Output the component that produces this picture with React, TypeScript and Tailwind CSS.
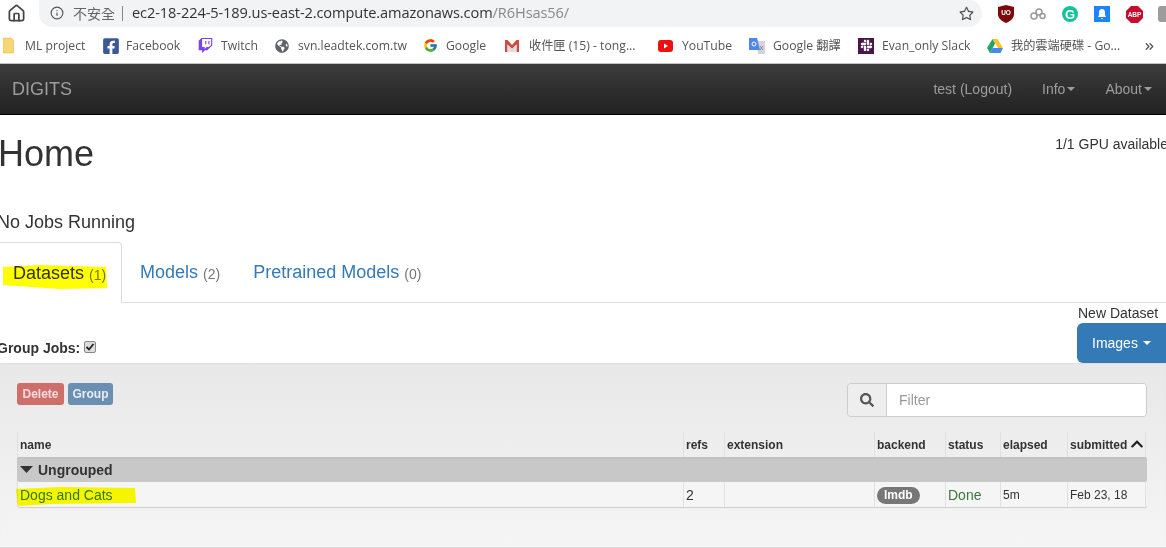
import React from "react";
import { FaTwitch, FaGlobeAmericas, FaFacebookSquare, FaSlack, FaSearch, FaRegStar, FaChevronUp } from "react-icons/fa";
import { FcGoogle } from "react-icons/fc";
import { LuHouse, LuInfo, LuChevronsRight } from "react-icons/lu";

const Folder = () => (
  <svg width="11" height="17" viewBox="0 0 10 16"><path d="M0 1h7l3 2v12H0z" fill="#f7d774" stroke="#e3b94e" strokeWidth="0.6" /></svg>
);
const Gmail = () => (
  <svg width="14" height="12" viewBox="0 0 14 12"><path d="M0 0h2.500L7 5l4.500-5H14v12h-2.500V4.500L7 9 2.500 4.500V12H0z" fill="#cf4a3f" /><path d="M2.500 4.500 7 9l4.500-4.500V12h-9z" fill="#ddd" /></svg>
);
const Youtube = () => (
  <svg width="15" height="12" viewBox="0 0 15 12"><rect width="15" height="12" rx="3" fill="#ee0f0f" /><path d="M6 3.500 10 6 6 8.500z" fill="#fff" /></svg>
);
const Translate = () => (
  <svg width="16" height="16" viewBox="0 0 16 16"><path d="M7 3h9v13H9z" fill="#d5d5d5" /><path d="M0 0h8l3 12H0z" fill="#4f86ec" /><circle cx="5" cy="6" r="2" fill="none" stroke="#fff" strokeWidth="1" /><path d="M11 8l3 4m0-4-3 4" stroke="#888" /></svg>
);
const Drive = () => (
  <svg width="16" height="14" viewBox="0 0 16 14"><path d="M5.500 0h5L16 9h-5z" fill="#f7c32e" /><path d="M5.500 0 8 4.500 3 14 0 9z" fill="#1fa463" /><path d="M5.500 9H16l-2.500 5H3z" fill="#4688f1" /></svg>
);
const SlackTile = () => (
  <span className="flex h-[16px] w-[16px] items-center justify-center bg-[#4a154b]">
    <FaSlack size={13} color="#ffffff" />
  </span>
);
const UBlock = () => (
  <svg width="16" height="18" viewBox="0 0 16 18">
    <path d="M0 2 8 0l8 2v7c0 4-3 7-8 9-5-2-8-5-8-9z" fill="#7d0a0a" />
    <text x="8" y="10" textAnchor="middle" fontSize="6.500" fontWeight="700" fill="#fff" fontFamily="Liberation Sans">UO</text>
  </svg>
);
const Cloudish = () => (
  <svg width="16" height="12" viewBox="0 0 16 12" fill="none" stroke="#9a9a9a" strokeWidth="1.500"><circle cx="4" cy="8" r="3" /><circle cx="9" cy="4" r="3" /><circle cx="12.500" cy="8" r="2.500" /></svg>
);
const Grammarly = () => (
  <div className="flex h-4 w-4 items-center justify-center rounded-full bg-[#15c39a] text-[13px] font-bold leading-none text-white">G</div>
);
const Bell = () => (
  <svg width="16" height="16" viewBox="0 0 16 16"><rect width="16" height="16" fill="#1a85ff" /><path d="M8 3c-2 0-3 1.500-3 3.500V9l-1 2h8l-1-2V6.500C11 4.500 10 3 8 3zM7 12h2l-1 1.500z" fill="#fff" /></svg>
);
const Abp = () => (
  <svg width="17" height="17" viewBox="0 0 17 17">
    <path d="M5 0h7l5 5v7l-5 5H5l-5-5V5z" fill="#c70d2c" />
    <text x="8.500" y="11" textAnchor="middle" fontSize="6.500" fontWeight="700" fill="#fff" fontFamily="Liberation Sans">ABP</text>
  </svg>
);

const bookmarks: { icon: React.ReactNode; label: string; iconW: string; width: string }[] = [
  { icon: <Folder />, label: "ML project", iconW: "w-[22px]", width: "w-[99px]" },
  { icon: <FaFacebookSquare size={18} color="#3b5998" />, label: "Facebook", iconW: "w-[24px]", width: "w-[96px]" },
  { icon: <FaTwitch size={15} color="#7e3ff2" />, label: "Twitch", iconW: "w-[23px]", width: "w-[77px]" },
  { icon: <FaGlobeAmericas size={14} color="#5f6368" />, label: "svn.leadtek.com.tw", iconW: "w-[23px]", width: "w-[148px]" },
  { icon: <FcGoogle size={15} />, label: "Google", iconW: "w-[23px]", width: "w-[82px]" },
  { icon: <Gmail />, label: "收件匣 (15) - tong...", iconW: "w-[24px]", width: "w-[153px]" },
  { icon: <Youtube />, label: "YouTube", iconW: "w-[24px]", width: "w-[91px]" },
  { icon: <Translate />, label: "Google 翻譯", iconW: "w-[24px]", width: "w-[109px]" },
  { icon: <SlackTile />, label: "Evan_only Slack", iconW: "w-[24px]", width: "w-[129px]" },
  { icon: <Drive />, label: "我的雲端硬碟 - Go...", iconW: "w-[24px]", width: "w-[150px]" },
];

const cols = ["w-[666px]", "w-[41px]", "w-[150px]", "w-[71px]", "w-[55px]", "w-[67px]", "w-[79px]"];
const heads = ["name", "refs", "extension", "backend", "status", "elapsed", "submitted"];

export default function App() {
  return (
    <div className="relative h-[548px] w-[1166px] overflow-hidden bg-white font-['Liberation_Sans',sans-serif] text-[14px] text-[#333]">
      {/* browser toolbar */}
      <div className="flex h-[27px] items-start bg-white">
        <div className="flex w-[39px] shrink-0 justify-center pt-[4px] pr-[7px] text-[#444]">
          <LuHouse size={19} strokeWidth={2.2} />
        </div>
        <div className="flex h-[27px] w-[943px] shrink-0 items-center rounded-r-[14px] rounded-bl-[14px] bg-[#f1f3f4] pb-[1px] pl-[11px] pr-[8px]">
          <LuInfo size={14} strokeWidth={2} className="text-[#555]" />
          <span className="ml-[9px] font-['Noto_Sans_CJK_TC',sans-serif] text-[14px] text-[#666]">不安全</span>
          <span className="ml-[7px] mr-[9px] h-[15px] w-px bg-[#888]" />
          <span className="font-['Open_Sans',sans-serif] text-[14.600px] tracking-[-0.1px] text-[#333]">
            ec2-18-224-5-189.us-east-2.compute.amazonaws.com<span className="text-[#888]">/R6Hsas56/</span>
          </span>
          <FaRegStar size={15} className="ml-auto text-[#555]" />
        </div>
        <div className="flex shrink-0 items-center pl-[16px] pt-[5px]">
          <div className="flex w-[32px] shrink-0 justify-start"><UBlock /></div>
          <div className="flex w-[32px] shrink-0 justify-start"><Cloudish /></div>
          <div className="flex w-[32px] shrink-0 justify-start"><Grammarly /></div>
          <div className="flex w-[32px] shrink-0 justify-start"><Bell /></div>
          <div className="flex w-[32px] shrink-0 justify-start"><Abp /></div>
          <div className="h-[16px] w-[16px] shrink-0 rounded-[3px] bg-[#9c9c9c]" />
        </div>
      </div>

      {/* bookmarks */}
      <div className="flex h-[37px] items-center border-b border-[#c4c4c4] bg-white pl-[3px] pt-[2px] font-['Open_Sans','Noto_Sans_CJK_TC',sans-serif] text-[12.200px] text-[#555]">
        {bookmarks.map((b) => (
          <div key={b.label} className={`flex shrink-0 items-center ${b.width}`}>
            <span className={`flex shrink-0 items-center ${b.iconW}`}>{b.icon}</span>
            <span className="whitespace-nowrap">{b.label}</span>
          </div>
        ))}
        <LuChevronsRight size={13} strokeWidth={2.5} className="ml-[6px] text-[#555]" />
      </div>

      {/* navbar */}
      <div className="flex h-[51px] items-center justify-between border-b border-black bg-gradient-to-b from-[#3c3c3c] to-[#222222] pl-[12px] text-[#9d9d9d]">
        <span className="text-[18px]">DIGITS</span>
        <div className="flex items-center">
          <span className="mr-[30px]">test (Logout)</span>
          <span className="mr-[30px] flex items-center">Info<Caret className="ml-[2px] border-t-[#9d9d9d]" /></span>
          <span className="mr-[14px] flex items-center">About<Caret className="ml-[2px] border-t-[#9d9d9d]" /></span>
        </div>
      </div>

      {/* page header */}
      <div className="flex items-start justify-between">
        <h1 className="-ml-[2px] mt-[19px] text-[36px] font-medium leading-[40px]">Home</h1>
        <span className="-mr-[2px] mt-[19px] whitespace-nowrap">1/1 GPU available</span>
      </div>
      <div className="-ml-[3px] mt-[38px] text-[18px] leading-[20px]">No Jobs Running</div>

      {/* tabs */}
      <div className="mt-[10px] flex h-[61px] border-b border-[#ddd]">
        <div className="mb-[-1px] flex h-[61px] w-[122px] items-start rounded-tr-[4px] border-r border-t border-[#ddd] bg-white pl-[13px] pt-[18px]">
          <span className="text-[18px] leading-[24px] text-[#333]">Datasets</span>
          <span className="ml-[5px] mt-[4px] text-[14px] leading-[20px] text-[#777]">(1)</span>
        </div>
        <div className="flex items-start pl-[18px] pt-[18px]">
          <span className="text-[18px] leading-[24px] text-[#337ab7]">Models</span>
          <span className="ml-[5px] mt-[4px] leading-[20px] text-[#777]">(2)</span>
        </div>
        <div className="flex items-start pl-[33px] pt-[18px]">
          <span className="text-[18px] leading-[24px] text-[#337ab7]">Pretrained Models</span>
          <span className="ml-[5px] mt-[4px] leading-[20px] text-[#777]">(0)</span>
        </div>
      </div>

      {/* toolbar */}
      <div className="flex h-[60px] items-start justify-between">
        <div className="mt-[35px] flex items-center">
          <span className="-ml-[3px] font-bold">Group Jobs:</span>
          <span className="ml-[4px] mt-[-3px] flex h-[12px] w-[12px] items-center justify-center rounded-[2px] border border-[#888] bg-[#ddd]">
            <svg width="10" height="10" viewBox="0 0 10 10"><path d="M1.500 5 4 7.500 8.500 2" fill="none" stroke="#222" strokeWidth="1.800" /></svg>
          </span>
        </div>
        <div className="flex flex-col">
          <span className="ml-[1px] mt-[1px] leading-[19px]">New Dataset</span>
          <div className="flex h-[40px] w-[89px] items-center justify-start rounded-l-[6px] bg-[#337ab7] pl-[15px] text-[14px] text-white">
            Images<Caret className="ml-[5px] border-t-white" />
          </div>
        </div>
      </div>

      {/* panel */}
      <div className="h-[185px] border-b border-[#ddd] bg-gradient-to-b from-[#e8e8e8] to-[#f5f5f5] pl-[17px] pr-[19px] pt-[20px] shadow-[inset_0_1px_1px_rgba(0,0,0,0.05)]">
        <div className="flex items-start justify-between">
          <div className="flex gap-[4px]">
            <span className="flex h-[22px] w-[47px] items-center justify-center rounded-[3px] bg-[#cf6f6c] text-[12px] font-bold text-[#f3dddc]">Delete</span>
            <span className="flex h-[22px] w-[45px] items-center justify-center rounded-[3px] bg-[#6a8fb3] text-[12px] font-bold text-[#e6edf3]">Group</span>
          </div>
          <div className="flex h-[34px] w-[300px] overflow-hidden rounded-[4px] border border-[#ccc]">
            <span className="flex w-[39px] items-center justify-center border-r border-[#ccc] bg-[#eee] text-[#555]">
              <FaSearch size={14} />
            </span>
            <span className="flex flex-1 items-center bg-white pl-[12px] text-[#999]">Filter</span>
          </div>
        </div>

        {/* table */}
        <div className="mt-[15px] w-[1130px]">
          <div className="flex h-[25px] text-[12px] font-bold text-[#333]">
            {heads.map((h, i) => (
              <div key={h} className={`flex items-center border-l border-[#e0e0e0] pl-[2px] pt-[1px] ${cols[i]} ${i === 6 ? "border-r" : ""}`}>
                {h}
                {i === 6 && <FaChevronUp size={14} className="ml-[3px] mt-[-2px] text-[#222]" />}
              </div>
            ))}
          </div>
          <div className="flex h-[25px] items-center rounded-[2px] border-t-2 border-[#c2c2c2] bg-[#c8c8c8] pl-[3px] text-[14px] font-bold">
            <svg width="13" height="7" viewBox="0 0 13 7" className="mt-[-3px]"><path d="M0 0h13L6.500 7z" fill="#333" /></svg>
            <span className="ml-[5px]">Ungrouped</span>
          </div>
          <div className="flex h-[25px] rounded-b-[2px] bg-[#f5f5f5] shadow-[0_1px_1px_rgba(0,0,0,0.15)]">
            <div className={`flex items-center border-l border-[#e0e0e0] pl-[2px] pt-[1px] text-[#337ab7] ${cols[0]}`}>Dogs and Cats</div>
            <div className={`flex items-center border-l border-[#e0e0e0] pl-[2px] pt-[1px] ${cols[1]}`}>2</div>
            <div className={`border-l border-[#e0e0e0] ${cols[2]}`} />
            <div className={`flex items-center border-l border-[#e0e0e0] pl-[2px] pt-[1px] ${cols[3]}`}>
              <span className="flex h-[17px] items-center rounded-full bg-[#777] px-[7px] text-[12px] font-bold text-white">lmdb</span>
            </div>
            <div className={`flex items-center border-l border-[#e0e0e0] pl-[2px] pt-[1px] text-[#3c763d] ${cols[4]}`}>Done</div>
            <div className={`flex items-center border-l border-[#e0e0e0] pl-[2px] pt-[1px] text-[12px] ${cols[5]}`}>5m</div>
            <div className={`flex items-center border-x border-[#e0e0e0] pl-[2px] pt-[1px] text-[12px] ${cols[6]}`}>Feb 23, 18</div>
          </div>
        </div>
      </div>

      {/* hand-drawn marker highlights */}
      <svg className="pointer-events-none absolute left-0 top-0 mix-blend-multiply" width="1166" height="548">
        <path d="M3 267 L40 265 L106 267 L107 288 L60 289 L3 285 Z" fill="#ffff00" />
        <path d="M16 489 L60 487 L135 488 L136 503 L50 504 L18 506 Z" fill="#ffff00" />
      </svg>
    </div>
  );
}

function Caret({ className = "" }: { className?: string }) {
  return <span className={`inline-block h-0 w-0 border-x-[4px] border-t-[4px] border-x-transparent ${className}`} />;
}
